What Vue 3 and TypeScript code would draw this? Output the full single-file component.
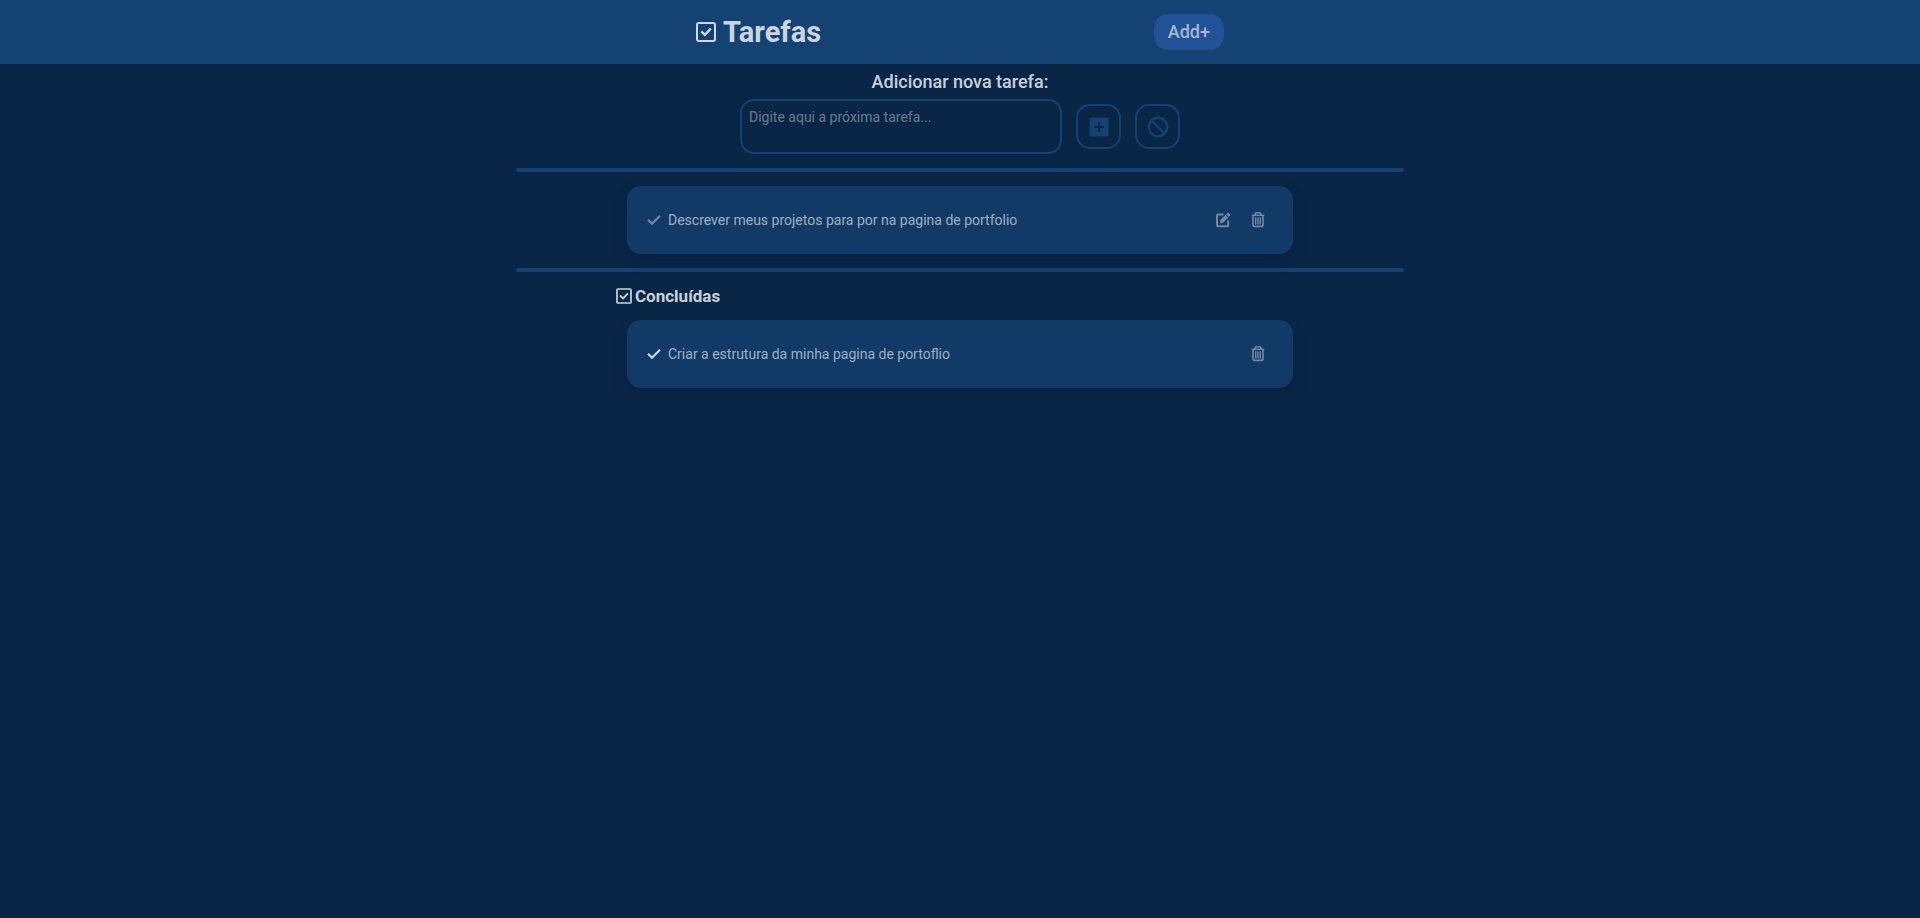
<script setup lang="ts">
import { computed, ref } from 'vue'

interface Task {
  id: number
  text: string
  done: boolean
}

const tasks = ref<Task[]>([
  { id: 1, text: 'Descrever meus projetos para por na pagina de portfolio', done: false },
  { id: 2, text: 'Criar a estrutura da minha pagina de portoflio', done: true },
])
const draft = ref('')
const formOpen = ref(true)

const pending = computed(() => tasks.value.filter((t) => !t.done))
const finished = computed(() => tasks.value.filter((t) => t.done))

function addTask() {
  const text = draft.value.trim()
  if (!text) return
  tasks.value.push({ id: Date.now(), text, done: false })
  draft.value = ''
}

function cancel() {
  draft.value = ''
  formOpen.value = false
}

function toggle(task: Task) {
  task.done = !task.done
}

function edit(task: Task) {
  draft.value = task.text
  formOpen.value = true
  remove(task)
}

function remove(task: Task) {
  tasks.value = tasks.value.filter((t) => t.id !== task.id)
}
</script>

<template>
  <div class="page">
    <header class="topbar">
      <div class="topbar-inner">
        <h1 class="title">
          <svg class="title-icon" viewBox="0 0 20 20" aria-hidden="true">
            <rect x="1" y="1" width="18" height="18" rx="2" fill="none" stroke="currentColor" stroke-width="2" />
            <path d="M5.3 9.400l3.500 3.500 6-6.300" fill="none" stroke="currentColor" stroke-width="2.300" />
          </svg>
          Tarefas
        </h1>
        <button class="add" type="button" @click="formOpen = true">Add+</button>
      </div>
    </header>

    <main class="content">
      <form v-if="formOpen" class="form" @submit.prevent="addTask">
        <label class="form-label" for="new-task">Adicionar nova tarefa:</label>
        <div class="form-row">
          <textarea id="new-task" v-model="draft" class="field" placeholder="Digite aqui a próxima tarefa..."></textarea>
          <button class="square" type="submit" aria-label="Adicionar">
            <svg class="square-icon" viewBox="0 0 24 24" aria-hidden="true">
              <path
                fill="currentColor"
                fill-rule="evenodd"
                d="M4.500 2.500h15a2 2 0 0 1 2 2v15a2 2 0 0 1-2 2h-15a2 2 0 0 1-2-2v-15a2 2 0 0 1 2-2zM11 7v4H7v2h4v4h2v-4h4v-2h-4V7z"
              />
            </svg>
          </button>
          <button class="square" type="button" aria-label="Cancelar" @click="cancel">
            <svg class="square-icon" viewBox="0 0 24 24" aria-hidden="true">
              <circle cx="12" cy="12" r="9.3" fill="none" stroke="currentColor" stroke-width="2.400" />
              <path d="M5.500 5.500l13 13" stroke="currentColor" stroke-width="2.400" />
            </svg>
          </button>
        </div>
      </form>

      <hr class="divider" />

      <ul class="list">
        <li v-for="task in pending" :key="task.id" class="card">
          <button class="icon-button" type="button" aria-label="Concluir" @click="toggle(task)">
            <svg class="icon" viewBox="0 0 16 16" aria-hidden="true">
              <path d="M2 7.700l4 4L14 3.700" fill="none" stroke="currentColor" stroke-width="2.200" />
            </svg>
          </button>
          <p class="text">{{ task.text }}</p>
          <div class="actions">
            <button class="icon-button" type="button" aria-label="Editar" @click="edit(task)">
              <svg class="icon" viewBox="0 0 16 16" aria-hidden="true">
                <path
                  d="M8.500 2.500H3a1 1 0 0 0-1 1v9.700a1 1 0 0 0 1 1h9.200a1 1 0 0 0 1-1V8.500"
                  fill="none"
                  stroke="currentColor"
                  stroke-width="2"
                />
                <path d="M4.800 11.200l.6-3.200 5-5 2.700 2.700-5 5z" fill="currentColor" />
                <path d="M11 2.400l1.300-1.300a1 1 0 0 1 1.400 0l1.300 1.300a1 1 0 0 1 0 1.400l-1.300 1.300z" fill="currentColor" />
              </svg>
            </button>
            <button class="icon-button" type="button" aria-label="Excluir" @click="remove(task)">
              <svg class="icon" viewBox="0 0 16 16" fill="none" stroke="currentColor" aria-hidden="true">
                <path d="M1.700 3.300h12.600" stroke-width="1.400" />
                <path d="M5 3C5 1.300 5.500.8 6.500.8h3c1 0 1.500.5 1.500 2.200" stroke-width="1.400" />
                <path d="M3 4v9.200a1.200 1.200 0 0 0 1.200 1.200h7.600a1.200 1.200 0 0 0 1.200-1.200V4" stroke-width="1.600" />
                <path d="M5.700 5.200v7.300M8 5.200v7.300M10.300 5.200v7.300" stroke-width="1.400" />
              </svg>
            </button>
          </div>
        </li>
      </ul>

      <hr class="divider" />

      <section class="done">
        <h2 class="subtitle">
          <svg class="subtitle-icon" viewBox="0 0 16 16" aria-hidden="true">
            <rect x="1" y="1" width="14" height="14" rx="1" fill="none" stroke="currentColor" stroke-width="1.700" />
            <path d="M4 7.500l3 3 5-5.200" fill="none" stroke="currentColor" stroke-width="1.900" />
          </svg>
          Concluídas
        </h2>
        <ul class="list">
          <li v-for="task in finished" :key="task.id" class="card">
            <button class="icon-button checked" type="button" aria-label="Reabrir" @click="toggle(task)">
              <svg class="icon" viewBox="0 0 16 16" aria-hidden="true">
                <path d="M2 7.700l4 4L14 3.700" fill="none" stroke="currentColor" stroke-width="2.200" />
              </svg>
            </button>
            <p class="text">{{ task.text }}</p>
            <div class="actions">
              <button class="icon-button" type="button" aria-label="Excluir" @click="remove(task)">
                <svg class="icon" viewBox="0 0 16 16" fill="none" stroke="currentColor" aria-hidden="true">
                  <path d="M1.700 3.300h12.600" stroke-width="1.400" />
                  <path d="M5 3C5 1.300 5.500.8 6.500.8h3c1 0 1.500.5 1.500 2.200" stroke-width="1.400" />
                  <path d="M3 4v9.200a1.200 1.200 0 0 0 1.200 1.200h7.600a1.200 1.200 0 0 0 1.200-1.200V4" stroke-width="1.600" />
                  <path d="M5.700 5.200v7.300M8 5.200v7.300M10.300 5.200v7.300" stroke-width="1.400" />
                </svg>
              </button>
            </div>
          </li>
        </ul>
      </section>
    </main>
  </div>
</template>

<style>
body {
  background: #0a2647;
}
</style>

<style scoped>
.page {
  min-height: 100vh;
  background: #0a2647;
  color: rgba(255, 255, 255, 0.8);
  font-family: Roboto, 'Liberation Sans', sans-serif;
}
.page * {
  box-sizing: border-box;
}
button {
  font: inherit;
  cursor: pointer;
}
svg {
  display: block;
  flex: none;
}
.topbar {
  background: #144272;
}
.topbar-inner {
  display: flex;
  align-items: center;
  justify-content: space-between;
  max-width: 528px;
  min-height: 64px;
  margin: 0 auto;
}
.title {
  display: flex;
  align-items: center;
  gap: 7px;
  margin: 0;
  font-size: 29px;
  line-height: 36px;
  font-weight: 700;
}
.title-icon {
  width: 20px;
  height: 20px;
}
.add {
  height: 36px;
  padding: 0 14px;
  border: 0;
  border-radius: 14px;
  background: #205295;
  color: rgba(255, 255, 255, 0.6);
  font-size: 18px;
  line-height: 20px;
  font-weight: 500;
}
.content {
  max-width: 888px;
  margin: 0 auto;
}
.form {
  display: flex;
  flex-direction: column;
  align-items: center;
  padding-top: 7px;
}
.form-label {
  font-size: 18px;
  line-height: 22px;
  font-weight: 500;
}
.form-row {
  display: flex;
  align-items: center;
  gap: 14px;
  margin-top: 6px;
}
.field {
  display: block;
  width: 322px;
  height: 55px;
  padding: 7px;
  border: 2px solid #144272;
  border-radius: 14px;
  outline: 0;
  resize: none;
  background: transparent;
  color: inherit;
  font: inherit;
  font-size: 14px;
  line-height: 18px;
}
.field::placeholder {
  color: rgba(255, 255, 255, 0.4);
  opacity: 1;
}
.square {
  display: grid;
  place-items: center;
  width: 45px;
  height: 45px;
  padding: 0;
  border: 2px solid #144272;
  border-radius: 14px;
  background: transparent;
  color: #144272;
}
.square-icon {
  width: 24px;
  height: 24px;
}
.divider {
  height: 4px;
  margin: 14px 0;
  border: 0;
  border-radius: 2px;
  background: #144272;
}
.list {
  display: grid;
  gap: 14px;
  width: 75%;
  margin: 0 auto;
  padding: 0;
  list-style: none;
}
.card {
  display: flex;
  align-items: center;
  gap: 6px;
  min-height: 68px;
  padding: 14px 27px 14px 19px;
  border-radius: 14px;
  background: #113a66;
  box-shadow: 0 7px 14px rgba(10, 20, 50, 0.25);
}
.icon-button {
  padding: 0;
  border: 0;
  background: transparent;
  color: rgba(255, 255, 255, 0.4);
}
.checked {
  color: rgba(255, 255, 255, 0.8);
}
.icon {
  width: 16px;
  height: 16px;
}
.text {
  flex: 1;
  margin: 0;
  color: rgba(255, 255, 255, 0.6);
  font-size: 14px;
  line-height: 18px;
}
.actions {
  display: flex;
  gap: 19px;
}
.subtitle {
  display: flex;
  align-items: center;
  gap: 3px;
  margin: 0 0 14px 100px;
  font-size: 17px;
  line-height: 20px;
  font-weight: 700;
}
.subtitle-icon {
  width: 16px;
  height: 16px;
}
</style>
